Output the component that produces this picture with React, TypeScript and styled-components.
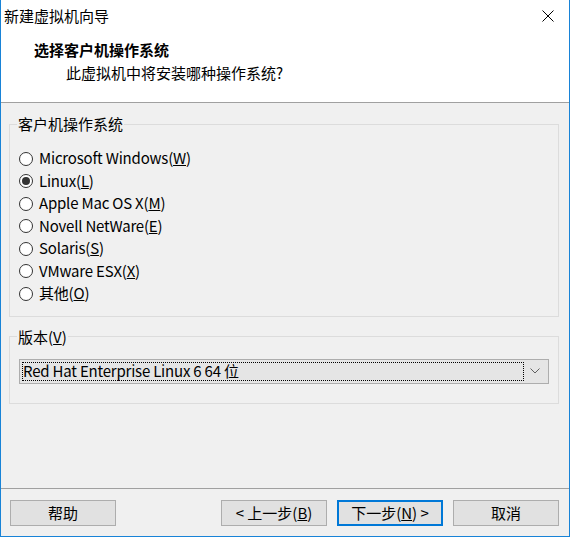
import { createGlobalStyle, styled } from 'styled-components';

const Global = createGlobalStyle`
  html, body {
    margin: 0;
    padding: 0;
    background: #f0f0f0;
  }
  body {
    font-family: "Noto Sans CJK SC", "Noto Sans", sans-serif;
    font-size: 15px;
    color: #000;
  }
  * {
    box-sizing: border-box;
  }
`;

const Window = styled.div`
  width: 570px;
  height: 537px;
  display: flex;
  flex-direction: column;
  border: 1px solid #1883d7;
  border-top: none;
  background: #f0f0f0;
`;

const TitleBar = styled.div`
  height: 32px;
  display: flex;
  align-items: center;
  justify-content: space-between;
  background: #fff;
  padding: 0 0 0 3px;
`;

const Title = styled.span`
  line-height: 20px;
  margin-top: -1px;
`;

const CloseButton = styled.div`
  width: 46px;
  height: 32px;
  display: flex;
  align-items: center;
  justify-content: center;
  margin-right: -1px;
  margin-left: auto;
  padding-left: 2px;
`;

const Header = styled.div`
  height: 71px;
  background: #fff;
  padding: 8px 0 0 33px;
  border-bottom: 1px solid #a0a0a0;
`;

const Heading = styled.div`
  font-weight: bold;
  line-height: 20px;
`;

const Subtitle = styled.div`
  line-height: 20px;
  margin: 3px 0 0 32px;
`;

const Body = styled.div`
  flex: 1;
  display: flex;
  flex-direction: column;
  gap: 10px;
  padding: 11px 10px 0 8px;
`;

const Group = styled.fieldset<{ $padBottom: number }>`
  margin: 0;
  min-width: 0;
  border: 1px solid #dcdcdc;
  padding: 0 9px ${(p) => p.$padBottom}px 9px;
`;

const Legend = styled.legend`
  line-height: 20px;
  padding: 0 1px;
  margin-left: -2px;
`;

const RadioList = styled.div`
  display: flex;
  flex-direction: column;
  padding-top: 13px;
`;

const RadioRow = styled.label`
  height: 22.5px;
  display: flex;
  align-items: center;
  gap: 6px;
  line-height: 20px;
  letter-spacing: -0.2px;
`;

const RadioCircle = styled.span<{ $checked: boolean }>`
  width: 14px;
  min-width: 14px;
  height: 14px;
  border-radius: 50%;
  border: 1px solid #333;
  background: #fff;
  display: flex;
  align-items: center;
  justify-content: center;
  margin-top: 1px;

  &::after {
    content: '';
    width: 8px;
    height: 8px;
    border-radius: 50%;
    background: ${(p) => (p.$checked ? '#333' : 'transparent')};
  }
`;

const Combo = styled.div`
  height: 25px;
  margin-top: 12px;
  display: flex;
  align-items: center;
  background: #e5e5e5;
  border: 1px solid #adadad;
  padding: 2px;
`;

const ComboValue = styled.div`
  flex: 1;
  height: 100%;
  display: flex;
  align-items: center;
  padding-left: 0;
  border: 1px dotted #000;
  line-height: 20px;
  letter-spacing: -0.2px;
`;

const ComboArrow = styled.div`
  width: 22px;
  display: flex;
  justify-content: center;
  align-items: center;
`;

const Footer = styled.div`
  height: 48px;
  display: flex;
  align-items: flex-start;
  gap: 10px;
  padding: 11px 10px 0 9px;
  border-top: 1px solid #a0a0a0;
`;

const Button = styled.div<{ $default?: boolean }>`
  width: 106px;
  height: 26px;
  display: flex;
  align-items: center;
  justify-content: center;
  background: #e1e1e1;
  border: ${(p) => (p.$default ? '2px solid #0078d7' : '1px solid #adadad')};
  line-height: 20px;
  white-space: pre;

  &:first-child {
    margin-right: auto;
  }
`;

const osOptions: { name: string; key: string; checked?: boolean }[] = [
  { name: 'Microsoft Windows', key: 'W' },
  { name: 'Linux', key: 'L', checked: true },
  { name: 'Apple Mac OS X', key: 'M' },
  { name: 'Novell NetWare', key: 'E' },
  { name: 'Solaris', key: 'S' },
  { name: 'VMware ESX', key: 'X' },
  { name: '其他', key: 'O' },
];

function Mnemonic({ text, k }: { text: string; k: string }) {
  return (
    <span>
      {text}(<u>{k}</u>)
    </span>
  );
}

function App() {
  return (
    <>
      <Global />
      <Window>
        <TitleBar>
          <Title>新建虚拟机向导</Title>
          <CloseButton>
            <svg width="12" height="12" viewBox="0 0 12 12">
              <path d="M0.5 0.5L11.5 11.5M11.5 0.5L0.5 11.5" stroke="#000" strokeWidth="1" />
            </svg>
          </CloseButton>
        </TitleBar>
        <Header>
          <Heading>选择客户机操作系统</Heading>
          <Subtitle>此虚拟机中将安装哪种操作系统?</Subtitle>
        </Header>
        <Body>
          <Group $padBottom={11}>
            <Legend>客户机操作系统</Legend>
            <RadioList>
              {osOptions.map((o) => (
                <RadioRow key={o.key}>
                  <RadioCircle $checked={!!o.checked} />
                  <Mnemonic text={o.name} k={o.key} />
                </RadioRow>
              ))}
            </RadioList>
          </Group>
          <Group $padBottom={19}>
            <Legend>
              <Mnemonic text="版本" k="V" />
            </Legend>
            <Combo>
              <ComboValue>Red Hat Enterprise Linux 6 64 位</ComboValue>
              <ComboArrow>
                <svg width="10" height="6" viewBox="0 0 10 6">
                  <path d="M0.5 0.5L5 5L9.5 0.5" stroke="#606060" strokeWidth="1" fill="none" />
                </svg>
              </ComboArrow>
            </Combo>
          </Group>
        </Body>
        <Footer>
          <Button>帮助</Button>
          <Button>{'< 上一步('}<u>B</u>)</Button>
          <Button $default>
            {'下一步('}<u>N</u>{') >'}
          </Button>
          <Button>取消</Button>
        </Footer>
      </Window>
    </>
  );
}

export default App;
